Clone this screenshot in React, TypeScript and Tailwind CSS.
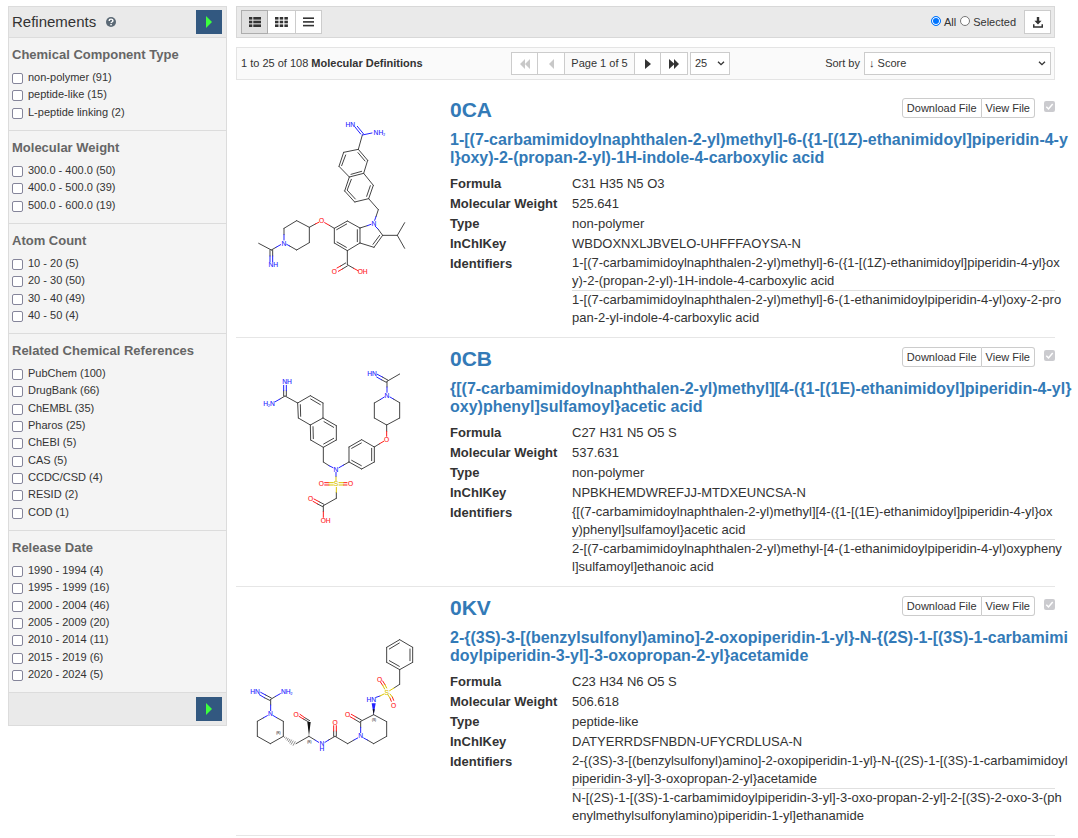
import React from "react";

type Bond = [number, number, number, number];

const BLUE = "#2222ff";
const RED = "#ff1a1a";
const GOLD = "#d9c400";
const GREY = "#444444";

const refinements = [
  {
    title: "Chemical Component Type",
    options: ["non-polymer (91)", "peptide-like (15)", "L-peptide linking (2)"],
  },
  {
    title: "Molecular Weight",
    options: ["300.0 - 400.0 (50)", "400.0 - 500.0 (39)", "500.0 - 600.0 (19)"],
  },
  {
    title: "Atom Count",
    options: ["10 - 20 (5)", "20 - 30 (50)", "30 - 40 (49)", "40 - 50 (4)"],
  },
  {
    title: "Related Chemical References",
    options: [
      "PubChem (100)",
      "DrugBank (66)",
      "ChEMBL (35)",
      "Pharos (25)",
      "ChEBI (5)",
      "CAS (5)",
      "CCDC/CSD (4)",
      "RESID (2)",
      "COD (1)",
    ],
  },
  {
    title: "Release Date",
    options: [
      "1990 - 1994 (4)",
      "1995 - 1999 (16)",
      "2000 - 2004 (46)",
      "2005 - 2009 (20)",
      "2010 - 2014 (11)",
      "2015 - 2019 (6)",
      "2020 - 2024 (5)",
    ],
  },
];

function Lines({ color = GREY, d }: { color?: string; d: Bond[] }) {
  return (
    <g stroke={color} strokeWidth="3" strokeLinecap="round">
      {d.map(([x1, y1, x2, y2], i) => (
        <line key={i} x1={x1} y1={y1} x2={x2} y2={y2} />
      ))}
    </g>
  );
}

function Atom({ x, y, color, size = 20, children }: { x: number; y: number; color: string; size?: number; children: React.ReactNode }) {
  return (
    <text x={x} y={y + size * 0.36} fill={color} stroke={color} strokeWidth="0.3" fontSize={size} textAnchor="middle">
      {children}
    </text>
  );
}

function Molecule0CA() {
  return (
    <svg viewBox="0 0 190 200" className="h-[200px] w-[190px]" role="img" aria-label="0CA">
      <g transform="translate(4 12) scale(0.33333)">
        <Lines
          d={[
            [367, 75, 355, 118], [355, 118, 311, 127], [311, 127, 297, 169], [297, 169, 328, 201],
            [328, 201, 371, 190], [371, 190, 383, 151], [383, 151, 355, 118], [375, 153, 354, 128],
            [317, 135, 305, 167], [333, 193, 365, 184],
            [371, 190, 400, 226], [400, 226, 386, 266], [386, 266, 344, 276], [344, 276, 314, 243],
            [314, 243, 328, 201], [391, 227, 380, 259], [346, 267, 322, 241], [322, 239, 334, 208],
            [386, 266, 415, 299], [415, 299, 408, 320],
            [268, 346, 283, 355], [283, 355, 322, 333], [322, 333, 360, 354], [360, 354, 360, 399],
            [360, 399, 322, 422], [322, 422, 283, 399], [283, 399, 283, 355], [290, 359, 320, 342],
            [352, 359, 352, 395], [319, 412, 291, 396],
            [360, 354, 382, 347], [428, 376, 402, 412], [402, 412, 360, 399], [419, 376, 399, 403],
            [428, 376, 414, 357], [428, 376, 472, 376], [472, 376, 494, 338], [472, 376, 494, 415],
            [322, 422, 322, 464], [322, 464, 341, 475], [317, 459, 302, 468], [322, 468, 307, 477],
            [226, 342, 208, 352], [208, 352, 170, 332], [170, 332, 132, 355], [132, 355, 132, 374],
            [208, 352, 208, 398], [208, 398, 170, 420], [170, 420, 149, 408],
            [94, 420, 108, 412], [94, 420, 56, 400], [90, 420, 90, 438], [98, 420, 98, 438],
          ]}
        />
        <Lines color={BLUE} d={[[362, 72, 345, 51], [370, 71, 352, 49], [367, 75, 396, 69], [408, 320, 404, 331], [382, 347, 393, 343], [414, 357, 406, 349], [132, 374, 132, 390], [108, 412, 122, 404], [149, 408, 140, 403], [90, 438, 90, 455], [98, 438, 98, 455]]} />
        <Lines color={RED} d={[[254, 338, 268, 346], [236, 337, 226, 342], [341, 475, 354, 482], [302, 468, 291, 474], [307, 477, 295, 484]]} />
        <Atom x={331} y={45} color={BLUE}>HN</Atom>
        <Atom x={418} y={67} color={BLUE}>NH<tspan fontSize="10" dy="4">2</tspan></Atom>
        <Atom x={402} y={341} color={BLUE}>N</Atom>
        <Atom x={245} y={333} color={RED}>O</Atom>
        <Atom x={132} y={400} color={BLUE}>N</Atom>
        <Atom x={100} y={465} color={BLUE}>NH</Atom>
        <Atom x={283} y={485} color={RED}>O</Atom>
        <Atom x={368} y={486} color={RED}>OH</Atom>
      </g>
    </svg>
  );
}

function Molecule0CB() {
  return (
    <svg viewBox="0 0 190 200" className="h-[200px] w-[190px]" role="img" aria-label="0CB">
      <g transform="translate(14 13) scale(0.33333)">
        <Lines
          d={[
            [101, 92, 101, 108], [109, 92, 109, 108], [105, 108, 90, 117], [105, 108, 143, 129],
            [143, 129, 181, 107], [181, 107, 219, 129], [219, 129, 219, 174], [219, 174, 181, 195],
            [181, 195, 145, 174], [145, 174, 143, 129], [151, 134, 152, 169], [182, 117, 211, 134],
            [219, 174, 259, 197], [259, 197, 259, 240], [259, 240, 220, 262], [220, 262, 182, 240],
            [182, 240, 181, 195], [189, 200, 190, 236], [222, 185, 251, 202], [251, 235, 221, 252],
            [220, 262, 220, 306], [220, 306, 237, 317],
            [281, 315, 297, 306], [297, 306, 297, 261], [297, 261, 335, 239], [335, 239, 373, 261],
            [373, 261, 373, 306], [373, 306, 335, 327], [335, 327, 297, 306],
            [305, 265, 334, 249], [365, 265, 365, 302], [334, 317, 305, 301],
            [373, 261, 389, 251], [410, 214, 410, 195], [410, 195, 373, 174], [373, 174, 373, 129],
            [410, 195, 449, 174], [449, 174, 449, 128], [373, 129, 392, 118], [449, 128, 430, 117],
            [411, 81, 411, 64], [411, 64, 449, 42], [413, 60, 397, 51], [409, 67, 394, 59],
            [259, 397, 259, 415], [259, 415, 220, 437], [220, 437, 220, 455], [222, 433, 207, 425], [218, 440, 203, 432],
          ]}
        />
        <Lines color={BLUE} d={[[101, 76, 101, 92], [109, 76, 109, 92], [90, 117, 76, 125], [237, 317, 249, 323], [267, 323, 281, 315], [258, 337, 258, 350], [392, 118, 403, 111], [430, 117, 420, 111], [411, 97, 411, 81], [397, 51, 382, 43], [394, 59, 380, 51]]} />
        <Lines color={RED} d={[[389, 251, 401, 244], [410, 229, 410, 214], [224, 368, 237, 368], [224, 375, 237, 375], [280, 368, 291, 368], [280, 375, 291, 375], [207, 425, 192, 417], [203, 432, 189, 424], [220, 455, 220, 472]]} />
        <Lines color={GOLD} d={[[258, 350, 258, 362], [259, 382, 259, 397], [237, 368, 250, 368], [237, 375, 250, 375], [267, 368, 280, 368], [267, 375, 280, 375]]} />
        <Atom x={111} y={66} color={BLUE}>NH</Atom>
        <Atom x={57} y={130} color={BLUE}>H<tspan fontSize="10" dy="4">2</tspan><tspan dy="-4">N</tspan></Atom>
        <Atom x={258} y={328} color={BLUE}>N</Atom>
        <Atom x={258} y={372} color={GOLD}>S</Atom>
        <Atom x={214} y={372} color={RED}>O</Atom>
        <Atom x={302} y={372} color={RED}>O</Atom>
        <Atom x={410} y={238} color={RED}>O</Atom>
        <Atom x={411} y={107} color={BLUE}>N</Atom>
        <Atom x={366} y={41} color={BLUE}>HN</Atom>
        <Atom x={182} y={417} color={RED}>O</Atom>
        <Atom x={227} y={482} color={RED}>OH</Atom>
      </g>
    </svg>
  );
}

function Molecule0KV() {
  return (
    <svg viewBox="0 0 190 200" className="h-[200px] w-[190px]" role="img" aria-label="0KV">
      <g transform="translate(4 34) scale(0.33333)">
        <Lines
          d={[
            [479, 29, 518, 52], [518, 52, 518, 97], [518, 97, 479, 119], [479, 119, 440, 97],
            [440, 97, 440, 52], [440, 52, 479, 29], [448, 57, 478, 39], [510, 57, 510, 92], [478, 109, 448, 92],
            [479, 119, 479, 163], [479, 163, 462, 174],
            [401, 254, 362, 274], [362, 274, 362, 292], [401, 254, 440, 275], [440, 275, 440, 319],
            [440, 319, 401, 341], [401, 341, 382, 330], [364, 270, 348, 261], [359, 277, 344, 268],
            [342, 330, 323, 341], [323, 341, 285, 319], [285, 319, 266, 330], [281, 319, 281, 303], [289, 319, 289, 303],
            [225, 330, 207, 319], [206, 276, 190, 267], [209, 272, 194, 263],
            [207, 319, 168, 341], [92, 208, 107, 199], [92, 208, 92, 225], [89, 211, 73, 203], [94, 204, 77, 195],
            [110, 263, 130, 274], [130, 274, 130, 319], [130, 319, 91, 341], [91, 341, 52, 319], [52, 319, 52, 274], [52, 274, 71, 263],
          ]}
        />
        <path d="M207 319 L202 276 L212 276 Z" fill="#111111" />
        <path d="M401 254 L395 220 L407 220 Z" fill={BLUE} />
        <path d="M401 256 L398 238 L404 238 Z" fill="#111111" />
        <g stroke={GREY} strokeWidth="1.8">
          <path d="M135 320 l-2 4 M140 322 l-3 6 M145 324 l-4 8 M150 327 l-5 9 M155 329 l-6 11 M160 332 l-7 12 M166 334 l-7 13" />
        </g>
        <Lines color={BLUE} d={[[408, 202, 420, 198], [362, 292, 362, 308], [382, 330, 371, 324], [353, 324, 342, 330], [266, 330, 255, 337], [236, 337, 225, 330], [92, 225, 92, 242], [107, 199, 121, 191], [73, 203, 58, 194], [77, 195, 62, 187], [71, 263, 82, 257], [110, 263, 100, 257]]} />
        <Lines color={RED} d={[[348, 261, 334, 253], [344, 268, 330, 260], [281, 303, 281, 287], [289, 303, 289, 287], [190, 267, 177, 259], [194, 263, 180, 253], [422, 157, 428, 166], [428, 153, 435, 164], [450, 204, 454, 214], [457, 201, 461, 211]]} />
        <Lines color={GOLD} d={[[420, 198, 432, 192], [462, 174, 449, 182], [428, 166, 434, 177], [435, 164, 440, 174], [444, 195, 450, 204], [450, 192, 457, 201]]} />
        <Atom x={419} y={149} color={RED}>O</Atom>
        <Atom x={461} y={226} color={RED}>O</Atom>
        <Atom x={440} y={187} color={GOLD}>S</Atom>
        <Atom x={394} y={209} color={BLUE}>HN</Atom>
        <Atom x={323} y={253} color={RED}>O</Atom>
        <Atom x={362} y={318} color={BLUE}>N</Atom>
        <Atom x={285} y={277} color={RED}>O</Atom>
        <Atom x={246} y={341} color={BLUE}>N</Atom>
        <Atom x={246} y={357} color={BLUE}>H</Atom>
        <Atom x={168} y={253} color={RED}>O</Atom>
        <Atom x={45} y={184} color={BLUE}>HN</Atom>
        <Atom x={140} y={184} color={BLUE}>NH<tspan fontSize="10" dy="4">2</tspan></Atom>
        <Atom x={91} y={252} color={BLUE}>N</Atom>
        <Atom x={402} y={271} color={GREY} size={9}>(S)</Atom>
        <Atom x={208} y={337} color={GREY} size={9}>(R)</Atom>
        <Atom x={115} y={310} color={GREY} size={9}>(R)</Atom>
      </g>
    </svg>
  );
}

const results = [
  {
    id: "0CA",
    Structure: Molecule0CA,
    name: ["1-[(7-carbamimidoylnaphthalen-2-yl)methyl]-6-({1-[(1Z)-ethanimidoyl]piperidin-4-y", "l}oxy)-2-(propan-2-yl)-1H-indole-4-carboxylic acid"],
    facts: [
      ["Formula", "C31 H35 N5 O3"],
      ["Molecular Weight", "525.641"],
      ["Type", "non-polymer"],
      ["InChIKey", "WBDOXNXLJBVELO-UHFFFAOYSA-N"],
    ],
    identifiers: [
      ["1-[(7-carbamimidoylnaphthalen-2-yl)methyl]-6-({1-[(1Z)-ethanimidoyl]piperidin-4-yl}ox", "y)-2-(propan-2-yl)-1H-indole-4-carboxylic acid"],
      ["1-[(7-carbamimidoylnaphthalen-2-yl)methyl]-6-(1-ethanimidoylpiperidin-4-yl)oxy-2-pro", "pan-2-yl-indole-4-carboxylic acid"],
    ],
  },
  {
    id: "0CB",
    Structure: Molecule0CB,
    name: ["{[(7-carbamimidoylnaphthalen-2-yl)methyl][4-({1-[(1E)-ethanimidoyl]piperidin-4-yl}", "oxy)phenyl]sulfamoyl}acetic acid"],
    facts: [
      ["Formula", "C27 H31 N5 O5 S"],
      ["Molecular Weight", "537.631"],
      ["Type", "non-polymer"],
      ["InChIKey", "NPBKHEMDWREFJJ-MTDXEUNCSA-N"],
    ],
    identifiers: [
      ["{[(7-carbamimidoylnaphthalen-2-yl)methyl][4-({1-[(1E)-ethanimidoyl]piperidin-4-yl}ox", "y)phenyl]sulfamoyl}acetic acid"],
      ["2-[(7-carbamimidoylnaphthalen-2-yl)methyl-[4-(1-ethanimidoylpiperidin-4-yl)oxypheny", "l]sulfamoyl]ethanoic acid"],
    ],
  },
  {
    id: "0KV",
    Structure: Molecule0KV,
    name: ["2-{(3S)-3-[(benzylsulfonyl)amino]-2-oxopiperidin-1-yl}-N-{(2S)-1-[(3S)-1-carbamimi", "doylpiperidin-3-yl]-3-oxopropan-2-yl}acetamide"],
    facts: [
      ["Formula", "C23 H34 N6 O5 S"],
      ["Molecular Weight", "506.618"],
      ["Type", "peptide-like"],
      ["InChIKey", "DATYERRDSFNBDN-UFYCRDLUSA-N"],
    ],
    identifiers: [
      ["2-{(3S)-3-[(benzylsulfonyl)amino]-2-oxopiperidin-1-yl}-N-{(2S)-1-[(3S)-1-carbamimidoyl", "piperidin-3-yl]-3-oxopropan-2-yl}acetamide"],
      ["N-[(2S)-1-[(3S)-1-carbamimidoylpiperidin-3-yl]-3-oxo-propan-2-yl]-2-[(3S)-2-oxo-3-(ph", "enylmethylsulfonylamino)piperidin-1-yl]ethanamide"],
    ],
  },
];

function Broken({ lines }: { lines: string[] }) {
  return (
    <>
      {lines.map((line) => (
        <span key={line} className="block whitespace-nowrap">{line}</span>
      ))}
    </>
  );
}

function RunButton() {
  return (
    <button type="button" aria-label="Apply refinements" className="flex h-6 w-[26px] items-center justify-center bg-[#325880]">
      <svg viewBox="0 0 6 12" className="h-3 w-[6px]" fill="#3dff3d"><path d="M0 0 L6 6 L0 12 Z" /></svg>
    </button>
  );
}

function Sidebar() {
  return (
    <aside className="w-[219px] shrink-0 border border-[#dcdcdc] bg-[#f4f4f4]">
      <div className="flex h-[31px] items-center border-b border-[#dcdcdc] bg-[#eaeaea] pr-1 pl-[3px]">
        <h2 className="text-[15px] leading-5">Refinements</h2>
        <svg viewBox="0 0 10 10" className="ml-[10px] h-[10px] w-[10px]">
          <circle cx="5" cy="5" r="5" fill="#5b6975" />
          <path d="M3.2 3.9 C3.2 1.5 6.9 1.6 6.9 3.8 C6.9 5 5.1 5 5.1 6.1" fill="none" stroke="#fff" strokeWidth="1.4" />
          <rect x="4.3" y="6.9" width="1.5" height="1.4" fill="#fff" />
        </svg>
        <div className="ml-auto"><RunButton /></div>
      </div>
      {refinements.map((group) => (
        <fieldset key={group.title} className="border-b border-[#dcdcdc] pr-1 pb-[9px] pl-[3px]">
          <legend className="float-left w-full pt-2 pb-[6px] text-[13px] leading-[17px] font-bold text-[#666]">{group.title}</legend>
          <ul className="clear-both">
            {group.options.map((option) => (
              <li key={option} className="nth-[3n+2]:pb-px">
                <label className="flex h-[17px] items-center gap-[5px] text-[11px] leading-[17px]">
                  <input type="checkbox" className="mt-[2px] h-[11px] w-[11px] appearance-none rounded-[2px] border border-[#85859a] bg-white checked:bg-[#0075ff]" />
                  {option}
                </label>
              </li>
            ))}
          </ul>
        </fieldset>
      ))}
      <div className="flex h-8 items-center justify-end bg-[#eaeaea] pr-1"><RunButton /></div>
    </aside>
  );
}

function Toolbar() {
  const view = "flex h-6 w-[27px] items-center justify-center border";
  return (
    <div className="flex h-8 items-center border border-[#d8d8d8] bg-[#eaeaea] px-1 pr-[3px] text-[11px]">
      <div className="flex">
        <button type="button" aria-label="Detailed list" className={view + " border-[#adadad] bg-[#e0e0e0]"}>
          <svg viewBox="0 0 12 10" className="h-[10px] w-3" fill="#333">
            {[0, 3.7, 7.4].map((y) => (<g key={y}><rect x="0" y={y} width="3.3" height="2.6" /><rect x="4.3" y={y} width="7.7" height="2.6" /></g>))}
          </svg>
        </button>
        <button type="button" aria-label="Grid" className={view + " border-x-0 border-[#ccc] bg-white"}>
          <svg viewBox="0 0 13 10" className="h-[10px] w-[13px]" fill="#333">
            {[0, 3.7, 7.4].map((y) => (<g key={y}><rect x="0" y={y} width="3.5" height="2.6" /><rect x="4.7" y={y} width="3.5" height="2.6" /><rect x="9.4" y={y} width="3.5" height="2.6" /></g>))}
          </svg>
        </button>
        <button type="button" aria-label="Compact list" className={view + " border-[#ccc] bg-white"}>
          <svg viewBox="0 0 11 10" className="h-[10px] w-[11px]" fill="#333">
            {[0.4, 4.1, 7.8].map((y) => (<rect key={y} x="0" y={y} width="11" height="1.6" />))}
          </svg>
        </button>
      </div>
      <div className="ml-auto flex items-center">
        {["All", "Selected"].map((scope, i) => (
          <label key={scope} className="mr-1 flex items-center gap-[3px]">
            <input type="radio" name="scope" defaultChecked={i === 0} className="mb-[2px] h-[10px] w-[10px] appearance-none rounded-full border border-[#777] bg-white checked:border-[#0075ff] checked:bg-[#0075ff] checked:shadow-[inset_0_0_0_1px_#fff]" />
            {scope}
          </label>
        ))}
        <button type="button" aria-label="Download" className="ml-1 flex h-6 w-[27px] items-center justify-center border border-[#ccc] bg-white">
          <svg viewBox="0 0 10 11" className="h-[11px] w-[10px]" fill="#333">
            <path d="M3.8 0 H6.2 V3.8 H8.6 L5 7.6 L1.4 3.8 H3.8 Z M0 7.3 H1.5 V9.2 H8.5 V7.3 H10 V10.8 H0 Z" />
          </svg>
        </button>
      </div>
    </div>
  );
}

function Chevron() {
  return (
    <svg viewBox="0 0 8 5" className="pointer-events-none absolute top-[9px] right-[5px] h-[5px] w-2" fill="none" stroke="#333" strokeWidth="1.3">
      <path d="M1 0.7 L4 3.7 L7 0.7" />
    </svg>
  );
}

function Pager() {
  const step = "flex h-[23px] w-[27px] items-center justify-center border border-[#ccc] bg-white";
  const field = "h-[23px] w-full appearance-none border border-[#ccc] bg-white pl-1 text-[11px] text-[#333]";
  return (
    <div className="mt-[9px] flex h-[33px] items-center border border-[#e4e4e4] bg-[#fafafa] pr-[3px] pl-1 text-[11px]">
      <p className="w-[270px]">1 to 25 of 108 <b>Molecular Definitions</b></p>
      <div className="flex">
        <button type="button" disabled aria-label="First page" className={step}>
          <svg viewBox="0 0 10 10" className="h-[10px] w-[10px]" fill="#c8c8c8"><path d="M5 0 V10 L0 5 Z M10 0 V10 L5 5 Z" /></svg>
        </button>
        <button type="button" disabled aria-label="Previous page" className={step + " border-l-0"}>
          <svg viewBox="0 0 5 10" className="h-[10px] w-[5px]" fill="#c8c8c8"><path d="M5 0 V10 L0 5 Z" /></svg>
        </button>
        <span className="flex h-[23px] w-[69px] items-center justify-center border-y border-[#ccc] whitespace-nowrap">Page 1 of 5</span>
        <button type="button" aria-label="Next page" className={step}>
          <svg viewBox="0 0 6 10" className="h-[10px] w-[6px]" fill="#333"><path d="M0 0 V10 L6 5 Z" /></svg>
        </button>
        <button type="button" aria-label="Last page" className={step + " border-l-0"}>
          <svg viewBox="0 0 10 10" className="h-[10px] w-[10px]" fill="#333"><path d="M0 0 L5 4.4 V0 L10 5 L5 10 V5.6 L0 10 Z" /></svg>
        </button>
      </div>
      <div className="relative ml-[2px] w-10">
        <select aria-label="Results per page" className={field}><option>25</option></select>
        <Chevron />
      </div>
      <label htmlFor="sort" className="mr-1 ml-auto">Sort by</label>
      <div className="relative w-[187px]">
        <select id="sort" className={field}><option>↓ Score</option></select>
        <Chevron />
      </div>
    </div>
  );
}

function Result({ item }: { item: (typeof results)[number] }) {
  const { Structure } = item;
  return (
    <article className="flex gap-6 border-b border-[#e6e6e6] pt-[9px] pb-[10px]">
      <div className="w-[190px] shrink-0"><Structure /></div>
      <div className="min-w-0 flex-1">
        <div className="flex items-start">
          <h3 className="mr-auto text-[21px] leading-6 font-bold text-[#337ab7]"><a href={"#" + item.id}>{item.id}</a></h3>
          <div className="flex text-[11px] leading-[18px]">
            <button type="button" className="rounded-l-[3px] border border-[#ccc] bg-white px-1">Download File</button>
            <button type="button" className="rounded-r-[3px] border border-l-0 border-[#ccc] bg-white px-1">View File</button>
          </div>
          <span className="relative mt-[3px] ml-[9px] h-[11px] w-[11px]">
            <input type="checkbox" disabled defaultChecked aria-label={"Select " + item.id} className="block h-[11px] w-[11px] appearance-none rounded-[2px] bg-[#cbcbcf]" />
            <svg viewBox="0 0 11 11" className="pointer-events-none absolute inset-0 h-[11px] w-[11px]" fill="none" stroke="#fff" strokeWidth="1.5"><path d="M2.3 5.8 L4.5 8 L8.7 3" /></svg>
          </span>
        </div>
        <h4 className="mt-[9px] text-[16px] leading-[18px] font-bold text-[#337ab7]"><a href={"#" + item.id}><Broken lines={item.name} /></a></h4>
        <dl className="mt-[7px] grid grid-cols-[122px_1fr] text-[13px] leading-5">
          {item.facts.map(([term, value]) => (
            <React.Fragment key={term}>
              <dt className="font-bold">{term}</dt>
              <dd>{value}</dd>
            </React.Fragment>
          ))}
          <dt className="font-bold">Identifiers</dt>
          <dd className="min-w-0 divide-y divide-[#e0e0e0] leading-[18px]">
            {item.identifiers.map((lines) => (
              <p key={lines[0]}><Broken lines={lines} /></p>
            ))}
          </dd>
        </dl>
      </div>
    </article>
  );
}

export default function App() {
  return (
    <div className="flex items-start gap-[9px] bg-white pt-[6px] pr-[23px] pl-2 font-['Liberation_Sans',Arial,sans-serif] text-[#333]">
      <Sidebar />
      <main className="min-w-0 flex-1">
        <Toolbar />
        <Pager />
        <div className="mt-[9px]">
          {results.map((item) => (<Result key={item.id} item={item} />))}
        </div>
      </main>
    </div>
  );
}
